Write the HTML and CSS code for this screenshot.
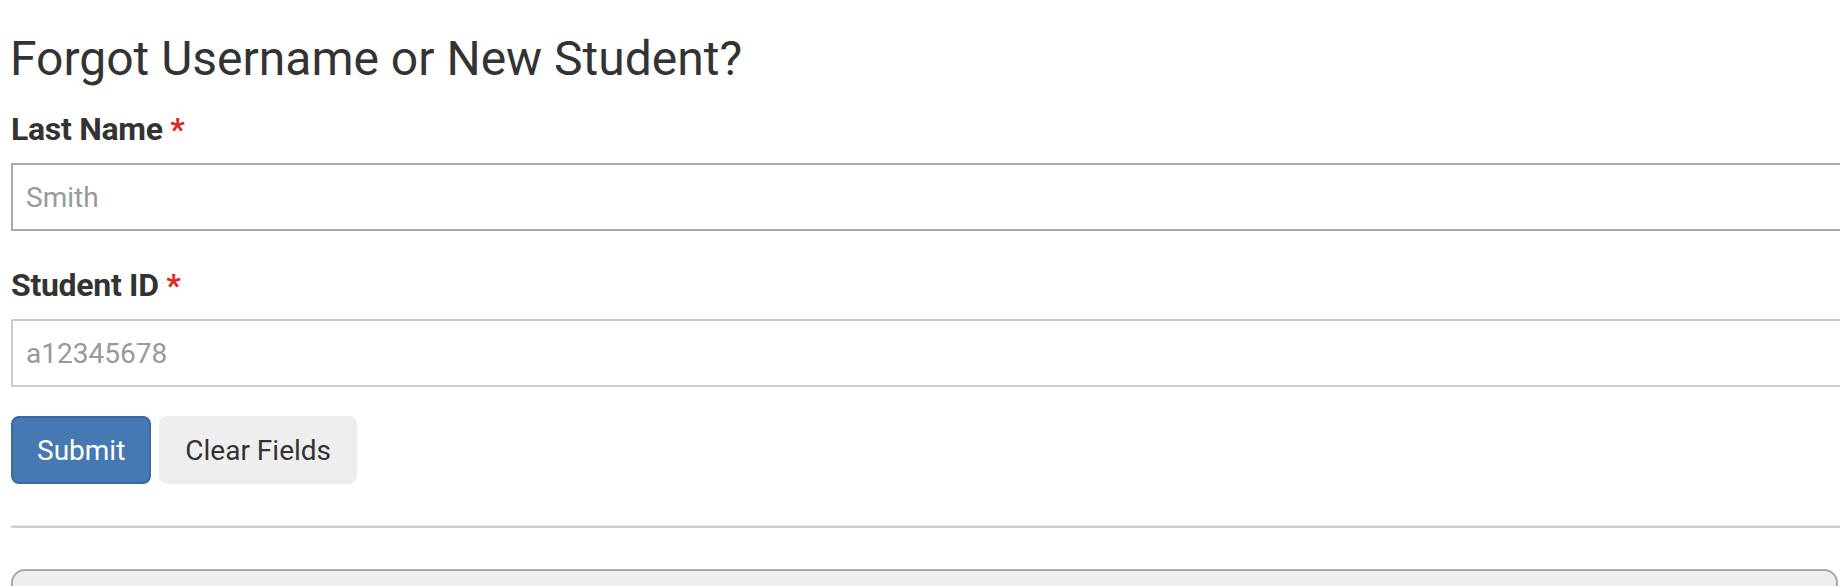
FILE: index.html
```html
<!DOCTYPE html>
<html lang="en">
<head>
<meta charset="utf-8">
<title>Forgot Username or New Student?</title>
<link rel="stylesheet" href="styles.css">
</head>
<body>
<main class="page">
  <h1 class="title">Forgot Username or New Student?</h1>
  <form class="form">
    <div class="group">
      <label class="label" for="lastname">Last Name <span class="req">*</span></label>
      <input class="field field-dark" id="lastname" type="text" placeholder="Smith">
    </div>
    <div class="group">
      <label class="label" for="studentid">Student ID <span class="req">*</span></label>
      <input class="field" id="studentid" type="text" placeholder="a12345678">
    </div>
    <div class="actions">
      <button class="btn btn-primary" type="button">Submit</button>
      <button class="btn btn-default" type="button">Clear Fields</button>
    </div>
  </form>
  <hr class="rule">
  <div class="panel"></div>
</main>
</body>
</html>
```

FILE: styles.css
```css
html, body {
  margin: 0;
  padding: 0;
  background: #ffffff;
  overflow: hidden;
}

body {
  font-family: Roboto, "Liberation Sans", Arial, sans-serif;
  color: #333333;
}

.page {
  padding: 0 2px 0 11px;
}

.title {
  font-size: 48px;
  line-height: 53px;
  font-weight: 400;
  margin: 32px 0 24px -1px;
  color: #333333;
}

.form {
  display: flex;
  flex-direction: column;
}

.group {
  display: flex;
  flex-direction: column;
  margin-bottom: 34px;
}

.group:nth-child(2) {
  margin-bottom: 29px;
}

.label {
  font-size: 32px;
  line-height: 40px;
  font-weight: 700;
  letter-spacing: -0.3px;
  margin-bottom: 14px;
  color: #333333;
}

.req {
  color: #e3261c;
}

.field {
  box-sizing: border-box;
  width: calc(100% + 40px);
  height: 68px;
  border: 2px solid #cccccc;
  border-radius: 0;
  padding: 0 13px;
  font-family: Roboto, "Liberation Sans", Arial, sans-serif;
  font-size: 28px;
  color: #333333;
  background: #ffffff;
  outline: none;
  margin: 0;
}

.field-dark {
  border-color: #aaaaaa;
}

.field::placeholder {
  color: #999999;
  opacity: 1;
}

.actions {
  display: flex;
  gap: 8px;
}

.btn {
  box-sizing: border-box;
  height: 68px;
  padding: 0 24px;
  font-family: Roboto, "Liberation Sans", Arial, sans-serif;
  font-size: 28px;
  border-radius: 8px;
  border: 2px solid transparent;
  cursor: pointer;
}

.btn-primary {
  background: #4678b2;
  border-color: #3a6aa3;
  color: #ffffff;
}

.btn-default {
  background: #eeeeee;
  border-color: #eeeeee;
  color: #333333;
}

.rule {
  margin: 41px 0 0 0;
  height: 0;
  border: 0;
  border-top: 1px solid #e6e6e6;
  border-bottom: 2px solid #cccccc;
  width: calc(100% + 2px);
}

.panel {
  margin-top: 41px;
  height: 60px;
  background: #eeeeee;
  border: 2px solid #aaaaaa;
  border-radius: 14px;
}
```
